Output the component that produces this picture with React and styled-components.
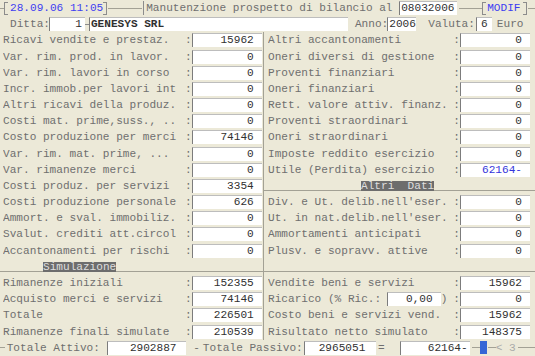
import React from 'react';
import styled, { createGlobalStyle } from 'styled-components';

// one text row of the terminal form
const ROW = '16.18px';
const CH = 6.69;

const GlobalStyle = createGlobalStyle`
  html, body { margin: 0; padding: 0; background: #ece9d8; }
  #root { width: 535px; height: 356px; }
`;

const Screen = styled.div`
  width: 535px;
  height: 356px;
  overflow: hidden;
  background: #ece9d8;
  color: #6f6f6f;
  font-family: "Liberation Mono", "Courier New", monospace;
  font-size: 11.1px;
  display: flex;
  flex-direction: column;
`;

const Bar = styled.div`
  display: flex;
  align-items: center;
  height: ${ROW};
  padding-left: ${({ $pl }) => $pl || 0}px;
  white-space: pre;
`;

const Rule = styled.div`
  flex: ${({ $w }) => ($w ? `0 0 ${$w}px` : '1 1 auto')};
  height: 1px;
  margin-left: ${({ $ml }) => $ml || 0}px;
  background: #a3a195;
`;

const Bracket = styled.div`
  flex: none;
  box-sizing: border-box;
  width: 4px;
  height: 13px;
  margin-left: ${({ $ml }) => $ml || 0}px;
  border: 1px solid #8c8c8c;
  ${({ $close }) => ($close ? 'border-left: none;' : 'border-right: none;')}
`;

const Text = styled.span`
  flex: none;
  margin-left: ${({ $ml }) => $ml || 0}px;
  color: ${({ $tone }) =>
    $tone === 'blue' ? '#3d3df2' : $tone === 'faint' ? '#a9a9a9' : '#6f6f6f'};
`;

const TitleBox = styled.div`
  flex: none;
  display: flex;
  align-items: center;
  height: 14px;
  margin-left: 1px;
  padding-left: 2px;
  border-left: 1px solid #8c8c8c;
  white-space: pre;
`;

const Field = styled.div`
  box-sizing: border-box;
  flex: none;
  width: ${({ $w }) => $w || 70}px;
  height: 14px;
  line-height: 13px;
  margin-left: ${({ $ml }) => $ml || 0}px;
  padding: 0 ${({ $pr }) => ($pr ?? 8)}px 0 ${({ $pl }) => $pl || 0}px;
  background: #fff;
  border-left: 1px solid #7c7c7c;
  border-top: 1px solid #bdbdbd;
  color: ${({ $blue }) => ($blue ? '#3434dc' : '#303030')};
  font-weight: ${({ $bold }) => ($bold ? 700 : 400)};
  text-align: ${({ $align }) => $align || 'right'};
  white-space: pre;
  overflow: hidden;
`;

const Dash = styled.span`
  flex: none;
  width: 4px;
  height: 1px;
  background: #8c8c8c;
`;

const Body = styled.div`
  display: grid;
  grid-template-columns: 264px 271px;
`;

const Column = styled.div`
  display: flex;
  flex-direction: column;
  box-sizing: border-box;
  border-right: ${({ $right }) => ($right ? 'none' : '1px solid #a3a195')};
`;

const Row = styled.div`
  display: flex;
  align-items: center;
  height: ${ROW};
  padding: ${({ $right }) => ($right ? '0 5px 0 4px' : '0 1.3px 0 3px')};
`;

const Label = styled.span`
  flex: 1 1 auto;
  min-width: 0;
  white-space: pre;
  overflow: hidden;
`;

const Colon = styled.span`
  flex: none;
  width: ${CH}px;
  text-align: center;
`;

const SectionRow = styled.div`
  display: flex;
  align-items: flex-end;
  box-sizing: border-box;
  height: ${ROW};
  padding-bottom: 3px;
`;

const Tag = styled.span`
  flex: none;
  height: 10px;
  line-height: 10px;
  background: #6d6d6d;
  color: #dedede;
  white-space: pre;
`;

const Thumb = styled.div`
  flex: none;
  width: 7px;
  height: 13px;
  background: #3566d6;
`;

const left = [
  ['Ricavi vendite e prestaz.', '15962'],
  ['Var. rim. prod. in lavor.', '0'],
  ['Var. rim. lavori in corso', '0'],
  ['Incr. immob.per lavori int', '0'],
  ['Altri ricavi della produz.', '0'],
  ['Costi mat. prime,suss., ..', '0'],
  ['Costo produzione per merci', '74146'],
  ['Var. rim. mat. prime, ...', '0'],
  ['Var. rimanenze merci', '0'],
  ['Costi produz. per servizi', '3354'],
  ['Costi produzione personale', '626'],
  ['Ammort. e sval. immobiliz.', '0'],
  ['Svalut. crediti att.circol', '0'],
  ['Accantonamenti per rischi', '0'],
];

const right = [
  ['Altri accantonamenti', '0'],
  ['Oneri diversi di gestione', '0'],
  ['Proventi finanziari', '0'],
  ['Oneri finanziari', '0'],
  ['Rett. valore attiv. finanz.', '0'],
  ['Proventi straordinari', '0'],
  ['Oneri straordinari', '0'],
  ['Imposte reddito esercizio', '0'],
  ['Utile (Perdita) esercizio', '62164-', true],
];

const rightMore = [
  ["Div. e Ut. delib.nell'eser.", '0'],
  ["Ut. in nat.delib.nell'eser.", '0'],
  ['Ammortamenti anticipati', '0'],
  ['Plusv. e sopravv. attive', '0'],
];

const simLeft = [
  ['Rimanenze iniziali', '152355'],
  ['Acquisto merci e servizi', '74146'],
  ['Totale', '226501'],
  ['Rimanenze finali simulate', '210539'],
];

const FormRow = ({ label, value, blue, $right }) => (
  <Row $right={$right}>
    <Label>{label}</Label>
    <Colon>:</Colon>
    <Field $blue={blue}>{value}</Field>
  </Row>
);

const App = () => {
  return (
    <Screen>
      <GlobalStyle />

      <Bar>
        <Rule $w={4} />
        <Bracket />
        <Text $tone="blue" $ml={2}>28.09.06 11:05</Text>
        <Bracket $close />
        <Rule $w={34} $ml={1} />
        <TitleBox>
          Manutenzione prospetto di bilancio al{' '}
          <Field $w={58} $align="left" $pl={1} $pr={0}>08032006</Field>
        </TitleBox>
        <Rule $w={23} $ml={2} />
        <Bracket />
        <Text $tone="blue" $ml={1}>MODIF</Text>
        <Bracket $close $ml={2} />
        <Rule $ml={1} />
      </Bar>

      <Bar $pl={10}>
        <Text>Ditta:</Text>
        <Field $w={36} $ml={-1} $pr={3}>1</Field>
        <Dash />
        <Field $w={259} $align="left" $pl={1} $pr={0} $bold>GENESYS SRL</Field>
        <Text $ml={7}>Anno:</Text>
        <Field $w={29} $ml={-1} $align="left" $pl={1} $pr={0}>2006</Field>
        <Text $ml={12}>Valuta:</Text>
        <Field $w={16} $ml={1} $align="center" $pr={0}>6</Field>
        <Text $ml={5}>Euro</Text>
      </Bar>

      <Body>
        <Column>
          {left.map(([l, v]) => (
            <FormRow key={l} label={l} value={v} />
          ))}
          <SectionRow>
            <Rule $w={43} />
            <Tag>Simulazione</Tag>
            <Rule />
          </SectionRow>
          {simLeft.map(([l, v]) => (
            <FormRow key={l} label={l} value={v} />
          ))}
        </Column>

        <Column $right>
          {right.map(([l, v, b]) => (
            <FormRow key={l} label={l} value={v} blue={b} $right />
          ))}
          <SectionRow>
            <Rule $w={97} />
            <Tag>Altri  Dati</Tag>
            <Rule />
          </SectionRow>
          {rightMore.map(([l, v]) => (
            <FormRow key={l} label={l} value={v} $right />
          ))}
          <SectionRow>
            <Rule />
          </SectionRow>
          <FormRow label="Vendite beni e servizi" value="15962" $right />
          <Row $right>
            <Label>Ricarico (% Ric.: </Label>
            <Field $w={54}>0,00</Field>
            <Text>)</Text>
            <Colon style={{ marginLeft: 6 }}>:</Colon>
            <Field>0</Field>
          </Row>
          <FormRow label="Costo beni e servizi vend." value="15962" $right />
          <FormRow label="Risultato netto simulato" value="148375" $right />
        </Column>
      </Body>

      <Bar>
        <Rule $w={5} />
        <Text $ml={1.7}>Totale Attivo:</Text>
        <Field $w={79} $ml={7.6} $pr={10}>2902887</Field>
        <Text $ml={6.7}>-</Text>
        <Text $ml={3}>Totale Passivo:</Text>
        <Field $w={72} $ml={1.6} $pr={11}>2965051</Field>
        <Text $ml={1.7}>=</Text>
        <Field $w={70} $ml={15} $pr={2}>62164-</Field>
        <Rule $w={8} $ml={2} />
        <Thumb />
        <Rule $w={8} $ml={1} />
        <Text $tone="faint">{'< 3'}</Text>
        <Rule $ml={2} />
      </Bar>
    </Screen>
  );
};

export default App;
